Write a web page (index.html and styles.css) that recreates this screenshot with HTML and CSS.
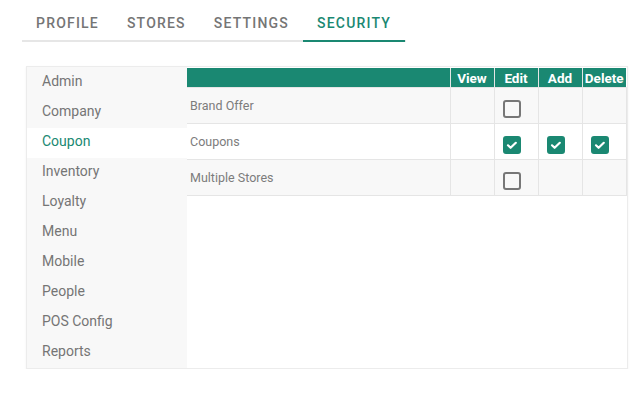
FILE: index.html
```html
<!DOCTYPE html>
<html lang="en">
<head>
  <meta charset="UTF-8" />
  <meta name="viewport" content="width=device-width, initial-scale=1.0" />
  <title>Security</title>
  <link rel="stylesheet" href="styles.css">
</head>
<body>
  <nav class="tabs">
    <a class="tab">Profile</a>
    <a class="tab">Stores</a>
    <a class="tab">Settings</a>
    <a class="tab active">Security</a>
  </nav>

  <div class="card">
    <ul class="modules">
      <li>Admin</li>
      <li>Company</li>
      <li class="active">Coupon</li>
      <li>Inventory</li>
      <li>Loyalty</li>
      <li>Menu</li>
      <li>Mobile</li>
      <li>People</li>
      <li>POS Config</li>
      <li>Reports</li>
    </ul>

    <div class="perms">
      <table>
        <colgroup>
          <col class="col-name">
          <col class="col-perm">
          <col class="col-perm">
          <col class="col-perm">
          <col class="col-perm">
        </colgroup>
        <thead>
          <tr>
            <th class="name"></th>
            <th>View</th>
            <th>Edit</th>
            <th>Add</th>
            <th>Delete</th>
          </tr>
        </thead>
        <tbody>
          <tr>
            <td class="name">Brand Offer</td>
            <td></td>
            <td><span class="box"></span></td>
            <td></td>
            <td></td>
          </tr>
          <tr>
            <td class="name">Coupons</td>
            <td></td>
            <td><span class="box checked"></span></td>
            <td><span class="box checked"></span></td>
            <td><span class="box checked"></span></td>
          </tr>
          <tr>
            <td class="name">Multiple Stores</td>
            <td></td>
            <td><span class="box"></span></td>
            <td></td>
            <td></td>
          </tr>
        </tbody>
      </table>
    </div>
  </div>
</body>
</html>
```

FILE: styles.css
```css
body {
  margin: 0;
  font-family: Roboto, 'Liberation Sans', sans-serif;
  background: #fff;
  padding: 5px 10px 0 22px;
}
.tabs {
  display: flex;
  width: 384px;
  border-bottom: 2px solid #e6e6e6;
}
.tab {
  padding: 10px 14px 9px;
  font-size: 14px;
  line-height: 16px;
  font-weight: 500;
  letter-spacing: 1.2px;
  text-transform: uppercase;
  color: #757575;
  margin-bottom: -2px;
  border-bottom: 2px solid transparent;
}
.tab.active {
  color: #1a8872;
  border-bottom-color: #1a8872;
}
.card {
  display: flex;
  margin: 24px 0 0 4px;
  width: 600px;
  height: 301px;
  border: 1px solid #ececec;
  box-shadow: 0 1px 2px rgba(0,0,0,0.06);
  background: #fff;
}
.modules {
  list-style: none;
  margin: 0;
  padding: 1px 0 0;
  width: 160px;
  background: #f8f8f8;
}
.modules li {
  height: 30px;
  line-height: 27px;
  padding-left: 15px;
  font-size: 14px;
  color: #757575;
}
.modules li.active {
  background: #fff;
  color: #1a8872;
}
.perms {
  flex: 1;
  padding-top: 1px;
}
table {
  border-collapse: collapse;
  table-layout: fixed;
  width: 439px;
  font-size: 12.5px;
}
.col-name {
  width: 263px;
}
.col-perm {
  width: 44px;
}
th {
  background: #1a8872;
  color: #fff;
  font-size: 13.5px;
  font-weight: 700;
  height: 19px;
  padding: 0;
  text-align: center;
  border-left: 1px solid #e5e5e5;
}
th.name {
  border-left: none;
}
td {
  height: 35px;
  padding: 0 0 0 8px;
  border: 1px solid #e5e5e5;
  color: #7c7c7c;
  vertical-align: middle;
}
td.name {
  padding-left: 3px;
  border-left: none;
}
tbody tr:nth-child(odd) {
  background: #f8f8f8;
}
.box {
  display: block;
  width: 14px;
  height: 14px;
  margin-top: 6px;
  border: 2px solid #777;
  border-radius: 3px;
}
.box.checked {
  border-color: #1a8872;
  background: #1a8872 url("data:image/svg+xml;utf8,<svg xmlns='http://www.w3.org/2000/svg' viewBox='0 0 14 14'><path d='M3 7.3l2.6 2.5 5.2-5' fill='none' stroke='white' stroke-width='2.2' stroke-linecap='round' stroke-linejoin='round'/></svg>") center / 14px no-repeat;
}
```
